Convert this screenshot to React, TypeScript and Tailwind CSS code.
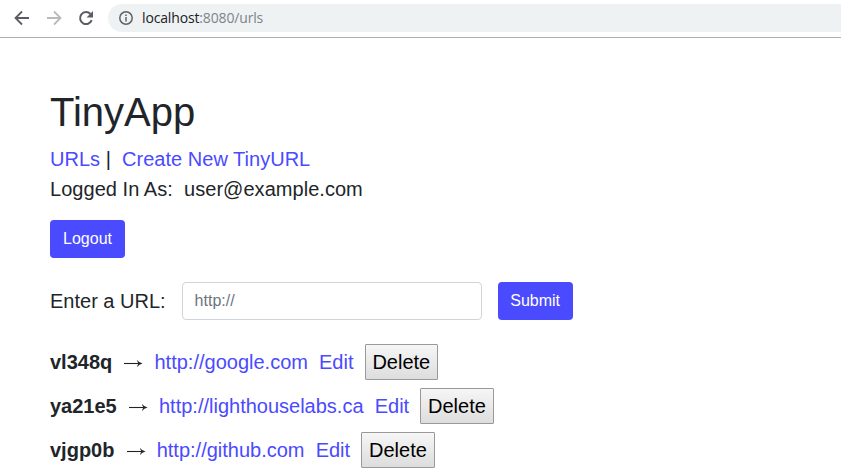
import React from "react";

const rows = [
  { id: "vl348q", url: "http://google.com" },
  { id: "ya21e5", url: "http://lighthouselabs.ca" },
  { id: "vjgp0b", url: "http://github.com" },
];

function BrowserBar() {
  return (
    <div className="flex h-[38px] items-center border-b border-[#b0b0b0] pb-px pl-[14px]">
      <svg width="16" height="16" viewBox="0 0 16 16" className="shrink-0" fill="none" stroke="#5a5d61" strokeWidth="1.800">
        <path d="M15 8H2.500M8 1.500L1.500 8l6.500 6.500" />
      </svg>
      <svg width="16" height="16" viewBox="0 0 16 16" className="ml-4 shrink-0" fill="none" stroke="#bababa" strokeWidth="1.800">
        <path d="M1 8h12.500M8 1.500L14.500 8 8 14.500" />
      </svg>
      <svg width="16" height="16" viewBox="0 0 16 16" className="ml-4 shrink-0" fill="none" stroke="#5a5d61" strokeWidth="2">
        <path d="M13.700 10.200A6 6 0 1 1 12.500 4" />
        <path d="M15 1v6.500H8.500z" fill="#5a5d61" stroke="none" />
      </svg>
      <div className="ml-[14px] flex h-7 flex-1 items-center rounded-l-full bg-[#eef2f3] pl-[11px]">
        <svg width="14" height="14" viewBox="0 0 14 14" fill="none" stroke="#5f6368" strokeWidth="1.500">
          <circle cx="7" cy="7" r="6.200" />
          <path d="M7 6v4.500M7 3.500V5" />
        </svg>
        <span className="ml-[9px] font-['Open_Sans',sans-serif] text-[14px] leading-5 tracking-[-0.15px] text-[#7f8488]">
          <span className="text-[#202124]">localhost</span>:8080/urls
        </span>
      </div>
    </div>
  );
}

function Arrow() {
  return (
    <svg width="20" height="11" viewBox="0 0 20 11" className="mt-[3px] shrink-0" aria-label="→">
      <path d="M1 5.500H18" fill="none" stroke="#212529" strokeWidth="1.100" />
      <path d="M14.300 2.200Q15.900 4.700 19.600 5.500Q15.900 6.300 14.300 8.800L13.900 8.500Q14.800 7 15.400 5.500Q14.800 4 13.900 2.500Z" fill="#212529" />
    </svg>
  );
}

export default function App() {
  return (
    <div className="h-[473px] overflow-hidden bg-white font-['Liberation_Sans',Arial,sans-serif] text-xl leading-[30px] text-[#212529]">
      <BrowserBar />
      <main className="pl-[50px] pt-[50px]">
        <h1 className="mb-2 text-[40px] leading-12">TinyApp</h1>
        <nav className="whitespace-pre tracking-[0.02px]">
          <a className="text-[#4a4aff]">URLs</a> |  <a className="text-[#4a4aff]">Create New TinyURL</a>
        </nav>
        <p className="whitespace-pre tracking-[0.04px]">Logged In As:  user@example.com</p>
        <button className="mt-4 block h-[38px] w-[75px] rounded bg-[#4a4aff] text-base text-white">Logout</button>
        <form className="mt-6 flex items-center">
          <label>Enter a URL:</label>
          <input placeholder="http://" className="ml-4 h-[38px] w-[300px] rounded border border-[#ced4da] px-3 text-base placeholder:text-[#6c757d]" />
          <button type="button" className="ml-4 h-[38px] w-[75px] rounded bg-[#4a4aff] text-base text-white">Submit</button>
        </form>
        <ul className="mt-6 flex flex-col gap-2">
          {rows.map((row) => (
            <li key={row.id} className="flex h-9 items-center gap-[11.120px] whitespace-pre">
              <b>{row.id}</b>
              <Arrow />
              <a className="text-[#4a4aff]">{row.url}</a>
              <a className="text-[#4a4aff]">Edit</a>
              <button className="h-9 rounded-[1px] border border-[#999] bg-gradient-to-b from-[#f6f6f6] to-[#dddddd] px-[6.800px] text-black">Delete</button>
            </li>
          ))}
        </ul>
      </main>
    </div>
  );
}
